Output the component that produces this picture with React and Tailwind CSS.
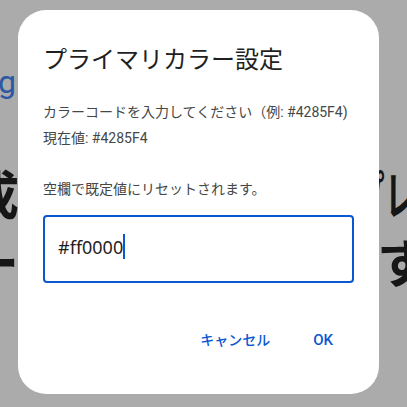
import React from "react";

const FONT = { fontFamily: "Roboto, 'Noto Sans CJK JP', sans-serif" };

export default function App() {
  return (
    <div className="relative w-[407px] h-[407px] overflow-hidden bg-white" style={FONT}>
      {/* underlying page */}
      <div className="flex flex-col pt-[62px] text-[#222]">
        <div className="flex h-[40px] leading-[40px] text-[32px] text-[#4285F4]">
          <span className="ml-[-2px]">g</span>
        </div>
        <div className="mt-[62px] flex justify-between h-[68px] leading-[68px] text-[52px] font-bold whitespace-nowrap">
          <span className="ml-[-33px]">成</span>
          <span className="mr-[-9px] scale-x-[0.6] origin-right">プレ</span>
        </div>
        <div className="flex justify-between h-[68px] leading-[68px] text-[52px] font-bold whitespace-nowrap">
          <span className="ml-[-33px]">ー</span>
          <span className="mr-[-22px]">す</span>
        </div>
      </div>

      {/* scrim */}
      <div className="absolute inset-0 bg-black/[0.33]" />

      {/* dialog */}
      <div className="absolute inset-0 pl-[18px] pt-[10px]">
        <div className="w-[361px] h-[384px] bg-white rounded-[28px] px-[25px] pt-[34px] flex flex-col">
          <h1 className="text-[24px] leading-[32px] text-[#1f1f1f] font-normal whitespace-nowrap">
            プライマリカラー設定
          </h1>
          <div className="mt-[24px] text-[14px] leading-[25.5px] text-[#444746] whitespace-nowrap">
            <div>カラーコードを入力してください（例: #4285F4)</div>
            <div>現在値: #4285F4</div>
            <div>&nbsp;</div>
            <div>空欄で既定値にリセットされます。</div>
          </div>
          <div className="mt-[13px] h-[68px] w-[311px] border-2 border-[#0b57d0] rounded-[4px] flex items-center pl-[13px]">
            <span className="text-[18px] text-[#1f1f1f] leading-[24px] mt-[-4px]" style={{ fontFamily: "'Noto Sans', Roboto, sans-serif" }}>
              #ff0000
            </span>
            <span className="w-[1.5px] h-[25px] bg-[#0b57d0] mt-[-5px]" />
          </div>
          <div className="mt-[37px] h-[40px] flex items-center justify-end gap-[43px] pr-[21px] text-[14px] font-medium text-[#0b57d0]">
            <span>キャンセル</span>
            <span className="text-[15px]">OK</span>
          </div>
        </div>
      </div>
    </div>
  );
}
